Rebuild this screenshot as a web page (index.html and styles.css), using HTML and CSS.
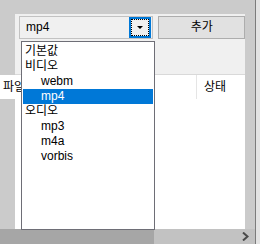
FILE: index.html
```html
<!DOCTYPE html>
<html>
<head>
<meta charset="UTF-8">
<title>형식 선택</title>
<link rel="stylesheet" href="styles.css">
</head>
<body>
	<div class="frame">
		<div class="panel">
			<div class="toolbar">
				<div class="combo">
					<span class="combo-text">mp4</span>
					<span class="combo-btn"><span class="focus"><span class="arrow"></span></span></span>
				</div>
				<a href="javascript:void(0)" class="add-btn">추가</a>
			</div>
			<div class="listview">
				<div class="lv-header">
					<div class="col col-name">파일</div>
					<div class="col col-state">상태</div>
				</div>
				<div class="lv-body"></div>
			</div>
		</div>
		<div class="hscroll">
			<div class="thumb"></div>
			<div class="track">
				<svg class="chev" width="7" height="9" viewBox="0 0 7 9"><path d="M1 0.5 L5.5 4.5 L1 8.5" fill="none" stroke="#4a4a4a" stroke-width="2"/></svg>
			</div>
		</div>
	</div>
	<!-- 펼쳐진 목록 -->
	<ul class="droplist">
		<li class="grp">기본값</li>
		<li class="grp">비디오</li>
		<li class="sub">webm</li>
		<li class="sub sel">mp4</li>
		<li class="grp">오디오</li>
		<li class="sub">mp3</li>
		<li class="sub">m4a</li>
		<li class="sub">vorbis</li>
	</ul>
</body>
</html>
```
FILE: styles.css
```css
html, body {
	margin: 0;
	padding: 0;
}

body {
	width: 260px;
	height: 244px;
	overflow: hidden;
	background: #e3e3e3;
	font-family: "Liberation Sans", "Noto Sans CJK KR", sans-serif;
	font-size: 12px;
	color: #000;
	position: relative;
}

.frame {
	width: 255px;
	height: 244px;
	background: #cbcbcb;
	border-right: 1px solid #7c7c7c;
	display: flex;
	flex-direction: column;
}

.panel {
	margin: 14px 0 0 15px;
	width: 230px;
	height: 215px;
	background: #f0f0f0;
	display: flex;
	flex-direction: column;
}

.toolbar {
	display: flex;
	align-items: flex-start;
	padding: 2px 0 0 4px;
	height: 60px;
	box-sizing: border-box;
}

.combo {
	display: flex;
	width: 135px;
	height: 23px;
	box-sizing: border-box;
	border: 1px solid #c2c2c2;
	background: #f0f0f0;
	padding: 0 1px 0 0;
}

.combo-text {
	flex: 1;
	line-height: 21px;
	padding-left: 6px;
}

.combo-btn {
	width: 22px;
	height: 21px;
	box-sizing: border-box;
	border: 2px solid #0078d7;
}

.focus {
	display: flex;
	align-items: center;
	justify-content: center;
	height: 100%;
	box-sizing: border-box;
	border: 1px dotted #000;
}

.arrow {
	width: 0;
	height: 0;
	border-left: 3px solid transparent;
	border-right: 3px solid transparent;
	border-top: 3px solid #000;
}

.add-btn {
	display: inline-block;
	margin-left: 5px;
	width: 87px;
	height: 23px;
	box-sizing: border-box;
	border: 1px solid #adadad;
	background: #e1e1e1;
	text-align: center;
	line-height: 20px;
	text-decoration: none;
	color: #000;
}

.listview {
	flex: 1;
	display: flex;
	flex-direction: column;
	border-top: 1px solid #d9d9d9;
	background: #fff;
}

.lv-header {
	display: flex;
	height: 24px;
	margin-left: -15px;
	background: #fff;
}

.col {
	line-height: 24px;
	white-space: nowrap;
	overflow: hidden;
}

.col-name {
	width: 197px;
	padding-left: 3px;
	box-sizing: border-box;
	border-right: 1px solid #e5e5e5;
}

.col-state {
	padding-left: 7px;
}

.lv-body {
	flex: 1;
}

.hscroll {
	display: flex;
	height: 15px;
}

.thumb {
	width: 154px;
	background: #a6a6a6;
}

.track {
	flex: 1;
	background: #c2c2c2;
	display: flex;
	justify-content: flex-end;
	align-items: center;
}

.chev {
	display: block;
	margin-right: 6px;
}

.droplist {
	position: absolute;
	left: 21px;
	top: 41px;
	width: 134px;
	height: 189px;
	box-sizing: border-box;
	margin: 0;
	padding: 1px;
	list-style: none;
	background: #fff;
	border: 1px solid #6e6e76;
}

.droplist li {
	height: 15px;
	line-height: 15px;
	white-space: nowrap;
}

.droplist li:first-child {
	margin-top: 1px;
}

.grp {
	padding-left: 2px;
}

.sub {
	padding-left: 18px;
}

.sel {
	background: #0078d7;
	color: #fff;
}
```
